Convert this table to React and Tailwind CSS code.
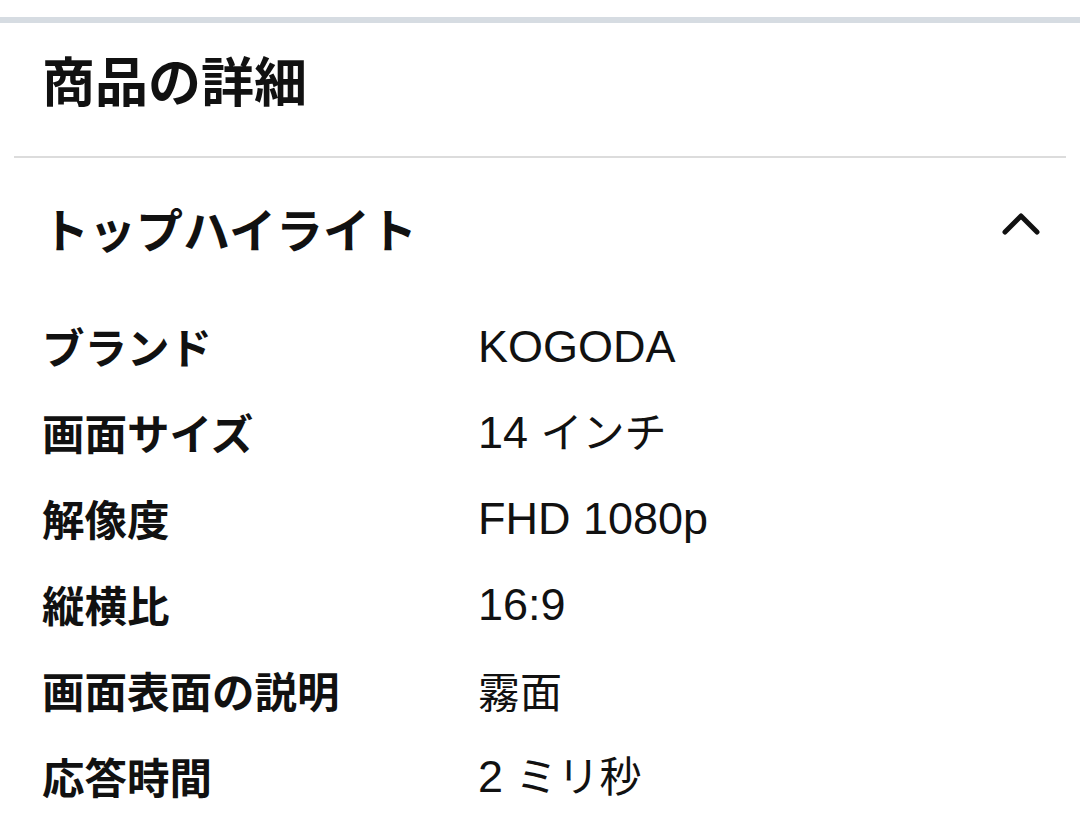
const ROWS = [
  { label: 'ブランド', value: 'KOGODA' },
  { label: '画面サイズ', value: '14 インチ' },
  { label: '解像度', value: 'FHD 1080p' },
  { label: '縦横比', value: '16:9' },
  { label: '画面表面の説明', value: '霧面' },
  { label: '応答時間', value: '2 ミリ秒' },
]

// Latin runs are set a bit larger than the kana/kanji, as in the source font
function Value({ text }) {
  const parts = text.split(/([\x20-\x7e]+)/).filter(Boolean)
  return (
    <div className="text-[42px] leading-none whitespace-pre">
      {parts.map((p, i) =>
        /^[\x20-\x7e]+$/.test(p) ? (
          <span key={i} className="text-[45px]" style={{ fontFamily: '"Liberation Sans", sans-serif' }}>{p}</span>
        ) : (
          <span key={i}>{p}</span>
        )
      )}
    </div>
  )
}

export default function App() {
  return (
    <div
      className="w-[1080px] h-[820px] overflow-hidden bg-white text-[#111111]"
      style={{ fontFamily: '"Noto Sans CJK JP", "Noto Sans", sans-serif' }}
    >
      <div className="h-[17px]" />
      <div className="h-[6px] bg-[#d6dce2]" />

      {/* Title */}
      <div className="h-[133px] flex items-center pl-[42px] pb-[20px]">
        <h1 className="text-[53px] font-bold leading-none">商品の詳細</h1>
      </div>
      <div className="mx-[14px] h-[2px] bg-[#dcdcdc]" />

      {/* Section header */}
      <div className="h-[145px] flex items-center justify-between pl-[42px] pr-[40px] pb-[6px]">
        <h2 className="text-[47px] font-bold leading-none">トップハイライト</h2>
        <svg width="38" height="24" viewBox="0 0 38 24" className="-mt-[8px]">
          <path d="M3 20 L19 4 L35 20" fill="none" stroke="#111111" strokeWidth="5" strokeLinecap="round" strokeLinejoin="round" />
        </svg>
      </div>

      {/* Rows */}
      <div className="flex flex-col">
        {ROWS.map((row) => (
          <div key={row.label} className="h-[86px] flex items-center pl-[42px]">
            <div className="w-[436px] text-[42.5px] font-bold leading-none">{row.label}</div>
            <Value text={row.value} />
          </div>
        ))}
      </div>
    </div>
  )
}
